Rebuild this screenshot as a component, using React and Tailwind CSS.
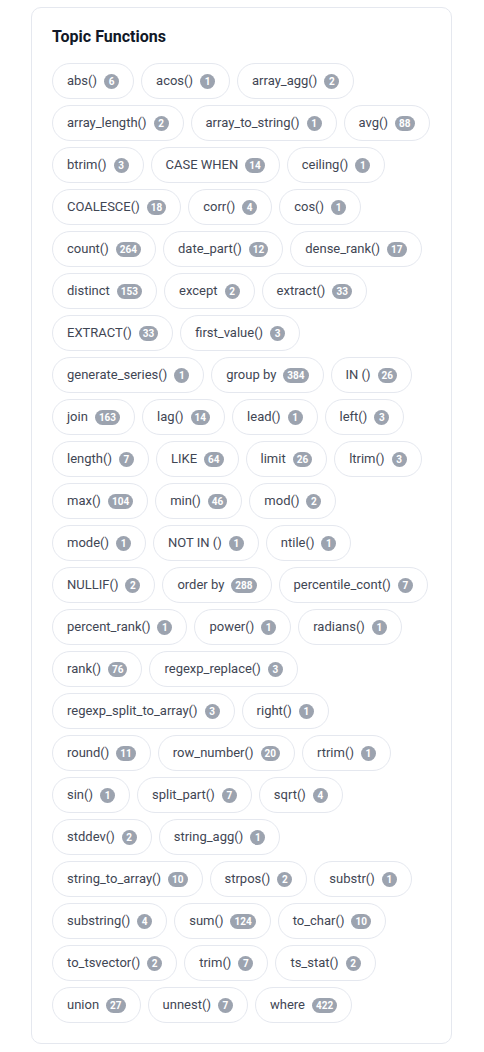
const topics = [
  ['abs()', 6], ['acos()', 1], ['array_agg()', 2], ['array_length()', 2], ['array_to_string()', 1], ['avg()', 88],
  ['btrim()', 3], ['CASE WHEN', 14], ['ceiling()', 1], ['COALESCE()', 18], ['corr()', 4], ['cos()', 1],
  ['count()', 264], ['date_part()', 12], ['dense_rank()', 17], ['distinct', 153], ['except', 2], ['extract()', 33],
  ['EXTRACT()', 33], ['first_value()', 3], ['generate_series()', 1], ['group by', 384], ['IN ()', 26],
  ['join', 163], ['lag()', 14], ['lead()', 1], ['left()', 3], ['length()', 7], ['LIKE', 64], ['limit', 26],
  ['ltrim()', 3], ['max()', 104], ['min()', 46], ['mod()', 2], ['mode()', 1], ['NOT IN ()', 1], ['ntile()', 1],
  ['NULLIF()', 2], ['order by', 288], ['percentile_cont()', 7], ['percent_rank()', 1], ['power()', 1],
  ['radians()', 1], ['rank()', 76], ['regexp_replace()', 3], ['regexp_split_to_array()', 3], ['right()', 1],
  ['round()', 11], ['row_number()', 20], ['rtrim()', 1], ['sin()', 1], ['split_part()', 7], ['sqrt()', 4],
  ['stddev()', 2], ['string_agg()', 1], ['string_to_array()', 10], ['strpos()', 2], ['substr()', 1],
  ['substring()', 4], ['sum()', 124], ['to_char()', 10], ['to_tsvector()', 2], ['trim()', 7], ['ts_stat()', 2],
  ['union', 27], ['unnest()', 7], ['where', 422],
]

export default function App() {
  return (
    <div className="bg-white min-h-[1052px] pt-[7px] pl-[31px]" style={{ fontFamily: 'Roboto, "Liberation Sans", sans-serif' }}>
      <div className="w-[421px] border border-[#e5e8ef] rounded-[10px] px-5 pt-[17px] pb-5">
        <h2 className="text-base leading-6 font-bold text-[#111827] mb-[14px]">Topic Functions</h2>
        <div className="flex flex-wrap gap-x-[7px] gap-y-1.5">
          {topics.map(([name, n]) => (
            <div key={name} className="h-9 flex items-center gap-[7px] px-3.5 border border-[#e5e8ef] rounded-full text-[13px] font-normal text-[#3f4654]">
              <span>{name}</span>
              <span className="h-[15px] min-w-[15px] px-1 rounded-full bg-[#9ca3af] text-white text-[10px] font-bold leading-[15px] flex items-center justify-center">{n}</span>
            </div>
          ))}
        </div>
      </div>
    </div>
  )
}
